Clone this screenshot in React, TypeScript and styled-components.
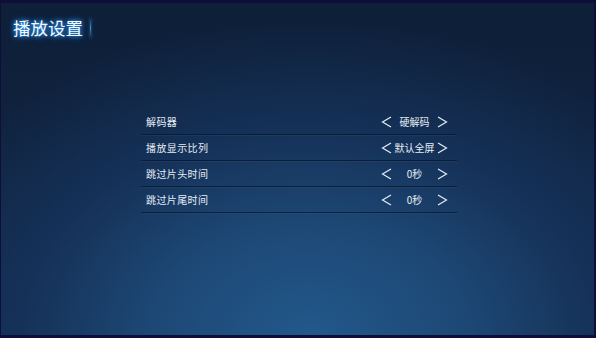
import React from "react";
import styled, { createGlobalStyle } from "styled-components";

const Global = createGlobalStyle`
  html, body { margin: 0; padding: 0; background: #0f0e3a; }
  body { font-family: "Noto Sans CJK SC", "Noto Sans", sans-serif; }
`;

const Frame = styled.div`
  box-sizing: border-box;
  width: 596px;
  height: 338px;
  border-style: solid;
  border-color: #0f0e3a;
  border-width: 3px 2px 3px 1px;
  background:
    radial-gradient(ellipse 75% 95% at 52% 100%, #22588b 0%, #1d4875 35%, #153158 65%, rgba(16,34,62,0) 100%),
    linear-gradient(180deg, #0e1f38 0%, #10233f 60%, #14294a 100%);
  display: flex;
  flex-direction: column;
  overflow: hidden;
`;

const Header = styled.div`
  display: flex;
  align-items: center;
  gap: 7px;
  padding: 14px 0 0 12px;
`;

const Title = styled.h1`
  margin: 0;
  font-size: 17.5px;
  font-weight: 400;
  line-height: 22px;
  color: #f4fbff;
  letter-spacing: 0;
  text-shadow: 0 0 4px #2f9dff, 0 0 7px #1f7fe0;
`;

const GlowBar = styled.div`
  width: 1px;
  height: 20px;
  background: linear-gradient(180deg, rgba(60,150,230,0) 0%, #3f98dc 50%, rgba(60,150,230,0) 100%);
  box-shadow: 0 0 3px #2e8ee0;
`;

const List = styled.div`
  margin: 70px 0 0 140px;
  width: 316px;
  display: flex;
  flex-direction: column;
`;

const Row = styled.div`
  box-sizing: border-box;
  height: 26px;
  display: flex;
  align-items: center;
  justify-content: space-between;
  padding: 0 9px 0 5px;
  border-bottom: 1px solid rgba(8, 22, 42, 0.75);
  box-shadow: 0 1px 0 rgba(60, 100, 150, 0.18);
`;

const Label = styled.span`
  font-size: 10px;
  color: #e6edf5;
  letter-spacing: 0.4px;
`;

const Control = styled.div`
  display: flex;
  align-items: center;
`;

const Value = styled.span`
  width: 45px;
  text-align: center;
  font-size: 10px;
  color: #e6edf5;
`;

const Chevron = ({ dir }: { dir: "l" | "r" }) => (
  <svg width="11" height="12" viewBox="0 0 11 12">
    <polyline
      points={dir === "l" ? "10,1 1.5,6 10,11" : "1,1 9.5,6 1,11"}
      fill="none"
      stroke="#e6edf5"
      strokeWidth="1.2"
    />
  </svg>
);

const rows = [
  { label: "解码器", value: "硬解码" },
  { label: "播放显示比列", value: "默认全屏" },
  { label: "跳过片头时间", value: "0秒" },
  { label: "跳过片尾时间", value: "0秒" },
];

export default function App() {
  return (
    <>
      <Global />
      <Frame>
        <Header>
          <Title>播放设置</Title>
          <GlowBar />
        </Header>
        <List>
          {rows.map((r) => (
            <Row key={r.label}>
              <Label>{r.label}</Label>
              <Control>
                <Chevron dir="l" />
                <Value>{r.value}</Value>
                <Chevron dir="r" />
              </Control>
            </Row>
          ))}
        </List>
      </Frame>
    </>
  );
}
